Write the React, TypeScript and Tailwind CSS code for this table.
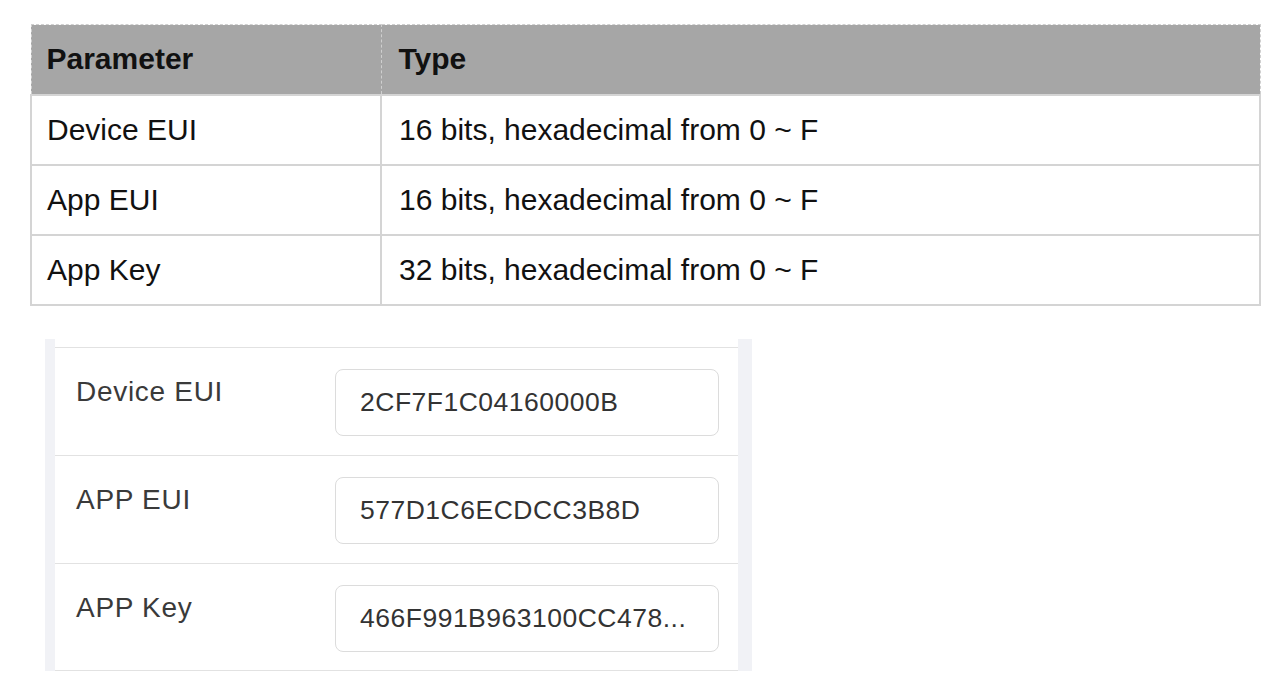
const rows = [
  { name: "Device EUI", type: "16 bits, hexadecimal from 0 ~ F" },
  { name: "App EUI", type: "16 bits, hexadecimal from 0 ~ F" },
  { name: "App Key", type: "32 bits, hexadecimal from 0 ~ F" },
];

const fields = [
  { label: "Device EUI", value: "2CF7F1C04160000B" },
  { label: "APP EUI", value: "577D1C6ECDCC3B8D" },
  { label: "APP Key", value: "466F991B963100CC478..." },
];

function ParamTable() {
  return (
    <table className="ml-[30px] w-[1231px] border-collapse text-[30px] leading-none text-[#111]">
      <thead>
        <tr className="h-[70px] bg-[#a6a6a6]">
          <th className="w-[350px] border border-dashed border-[#cfcfcf] pl-[15px] text-left font-bold">
            Parameter
          </th>
          <th className="border border-dashed border-[#cfcfcf] pl-[17px] text-left font-bold">
            Type
          </th>
        </tr>
      </thead>
      <tbody>
        {rows.map((r) => (
          <tr key={r.name} className="h-[70px]">
            <td className="border-2 border-[#d4d4d4] pl-[15px]">{r.name}</td>
            <td className="border-2 border-[#d4d4d4] pl-[17px]">{r.type}</td>
          </tr>
        ))}
      </tbody>
    </table>
  );
}

function DeviceForm() {
  return (
    <div className="ml-[45px] mt-[33px] w-[707px] bg-[#f1f2f6] pl-[10px] pr-[14px]">
      <div className="bg-white pt-[8px]">
        {fields.map((f, i) => (
          <div
            key={f.label}
            className={
              "flex h-[108px] items-start border-t border-[#e2e2e2] " +
              (i === fields.length - 1 ? "border-b" : "")
            }
          >
            <div className="mt-[30px] w-[280px] pl-[21px] text-[28px] leading-none tracking-[0.7px] text-[#3a3a3a]">
              {f.label}
            </div>
            <div className="mt-[21px] flex h-[67px] w-[384px] items-center rounded-[8px] border border-[#dcdcdc] pl-[24px] text-[26.5px] leading-none tracking-[0.5px] text-[#333]">
              {f.value}
            </div>
          </div>
        ))}
      </div>
    </div>
  );
}

export default function App() {
  return (
    <div
      className="h-[680px] w-[1280px] overflow-hidden bg-white pt-[24px]"
      style={{ fontFamily: '"Liberation Sans", Arial, sans-serif' }}
    >
      <ParamTable />
      <DeviceForm />
    </div>
  );
}
